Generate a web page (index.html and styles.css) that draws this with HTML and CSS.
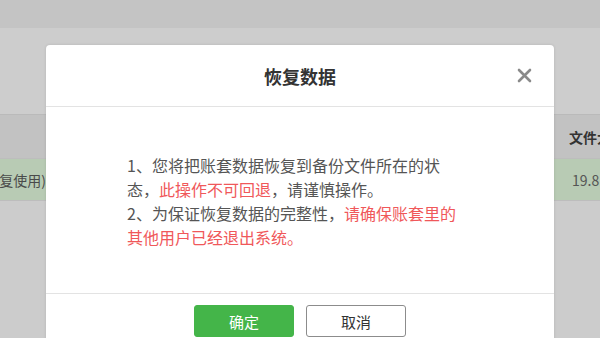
FILE: index.html
```html
<!DOCTYPE html>
<html lang="zh-CN">
<head>
    <meta charset="UTF-8">
    <meta name="viewport" content="width=device-width, initial-scale=1.0">
    <title>恢复数据</title>
    <link rel="stylesheet" href="styles.css">
</head>
<body>
    <div class="screen">
        <div class="topbar"></div>
        <div class="toolbar"></div>
        <div class="table">
            <div class="row head">
                <div class="cell first"></div>
                <div class="cell mid"></div>
                <div class="cell size">文件大小</div>
            </div>
            <div class="row selected">
                <div class="cell first"><span>(可恢复使用)</span></div>
                <div class="cell mid"></div>
                <div class="cell size num">19.8M</div>
            </div>
        </div>

        <div class="modal">
            <div class="modal-header">
                <h2>恢复数据</h2>
                <span class="close">
                    <svg width="15" height="15" viewBox="0 0 15 15">
                        <path d="M2 2L13 13M13 2L2 13" stroke="#8a8a8a" stroke-width="2.6" stroke-linecap="round"/>
                    </svg>
                </span>
            </div>
            <div class="modal-body">
                <p>1、您将把账套数据恢复到备份文件所在的状态，<span class="warn">此操作不可回退</span>，请谨慎操作。</p>
                <p>2、为保证恢复数据的完整性，<span class="warn">请确保账套里的其他用户已经退出系统。</span></p>
            </div>
            <div class="modal-footer">
                <button class="btn btn-ok">确定</button>
                <button class="btn btn-cancel">取消</button>
            </div>
        </div>
    </div>
</body>
</html>
```

FILE: styles.css
```css
body {
    margin: 0;
    background: #fff;
    font-family: "Microsoft YaHei", "Noto Sans CJK SC", "Noto Sans", sans-serif;
}
.screen {
    position: relative;
    height: 338px;
    overflow: hidden;
    background: #cccccc;
}
.topbar {
    height: 28px;
    background: #c4c4c4;
}
.toolbar {
    height: 86px;
    background: #cdcdcd;
}
.table {
    border-top: 1px solid #bababa;
}
.row {
    display: flex;
    height: 43px;
    border-bottom: 1px solid #bdbdbd;
}
.row.head {
    background: #c2c2c2;
}
.row.selected {
    height: 41px;
    background: #b8cbb4;
}
.cell {
    display: flex;
    align-items: center;
    font-size: 14px;
    color: #4a4a4a;
    white-space: nowrap;
}
.cell.first {
    width: 46px;
    overflow: hidden;
    justify-content: flex-end;
}
.cell.mid {
    flex: 1;
}
.cell.size {
    width: 31px;
    padding-left: 15px;
    overflow: hidden;
    font-weight: bold;
    color: #333;
}
.cell.size.num {
    padding-left: 18px;
    width: 28px;
    font-weight: normal;
    color: #555;
}

.modal {
    position: absolute;
    left: 46px;
    top: 45px;
    width: 508px;
    background: #fff;
    border-radius: 4px;
    box-shadow: 0 0 3px rgba(0,0,0,0.12);
}
.modal-header {
    position: relative;
    height: 61px;
    border-bottom: 1px solid #e3e3e3;
    display: flex;
    align-items: center;
    justify-content: center;
}
.modal-header h2 {
    margin: 0;
    font-size: 18px;
    font-weight: bold;
    color: #333;
}
.close {
    position: absolute;
    right: 22px;
    top: 23px;
    display: flex;
}
.modal-body {
    padding: 46px 84px 44px 81px;
    border-bottom: 1px solid #e3e3e3;
    font-size: 16px;
    line-height: 24px;
    color: #555;
}
.modal-body p {
    margin: 0;
}
.warn {
    color: #f0585a;
}
.modal-footer {
    display: flex;
    justify-content: center;
    gap: 12px;
    padding: 11px 0 20px;
}
.btn {
    width: 100px;
    height: 32px;
    border-radius: 3px;
    font-family: inherit;
    font-size: 15px;
    cursor: pointer;
}
.btn-ok {
    background: #44b549;
    border: 1px solid #44b549;
    color: #fff;
}
.btn-cancel {
    background: #fff;
    border: 1px solid #8c8c8c;
    color: #333;
}
```
